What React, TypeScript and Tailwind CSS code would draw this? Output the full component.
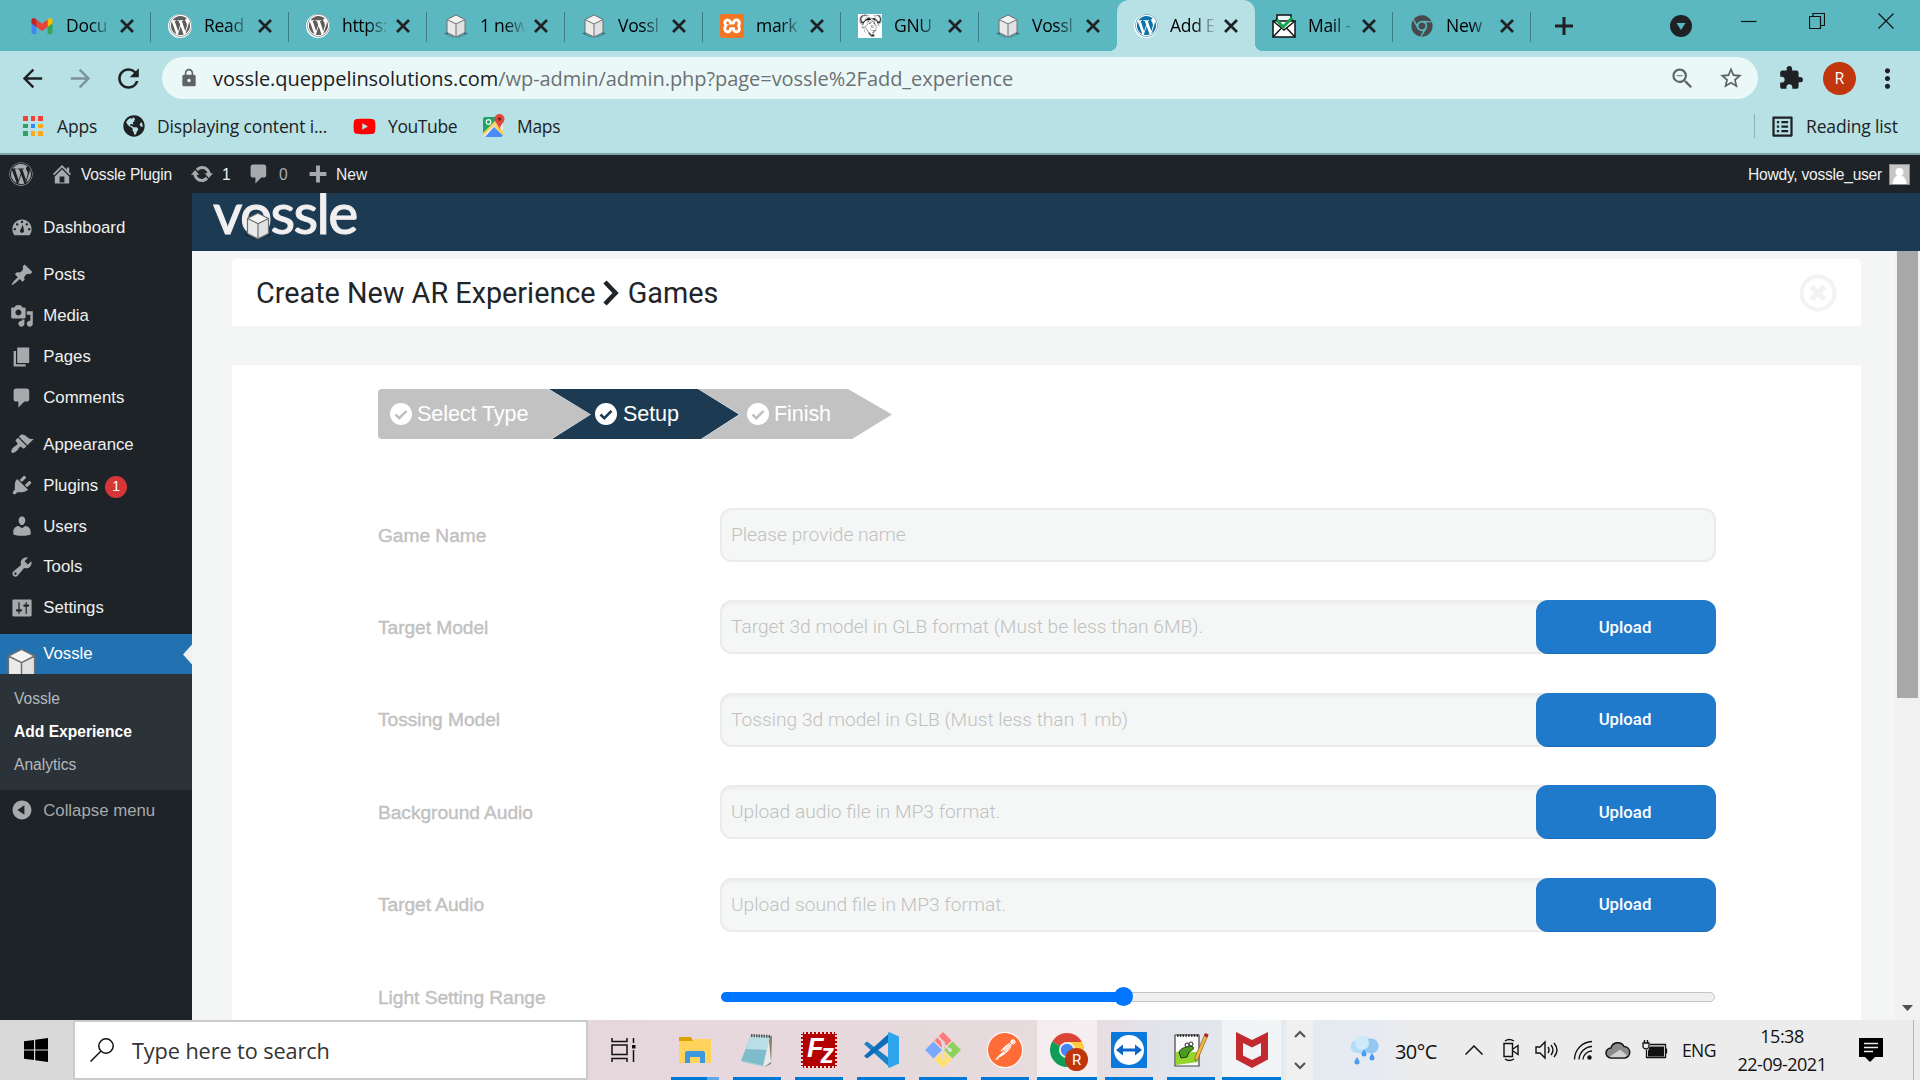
import type { ReactNode } from 'react';
import { FaChrome, FaWordpress, FaYoutube, FaGlobeAmericas } from 'react-icons/fa';
import {
  MdArrowBack,
  MdArrowForward,
  MdExtension,
  MdListAlt,
  MdLock,
  MdMoreVert,
  MdRefresh,
  MdStarBorder,
  MdZoomOut,
} from 'react-icons/md';
import { SiGnu, SiPostman, SiXampp } from 'react-icons/si';

/* ---------- icons ---------- */

const dash = {
  dashboard:
    'M3.76 16h12.48C17.34 14.63 18 12.9 18 11c0-4.42-3.58-8-8-8s-8 3.58-8 8c0 1.9.66 3.63 1.76 5zM10 4c.55 0 1 .45 1 1s-.45 1-1 1-1-.45-1-1 .45-1 1-1zM6 6c.55 0 1 .45 1 1s-.45 1-1 1-1-.45-1-1 .45-1 1-1zm8 0c.55 0 1 .45 1 1s-.45 1-1 1-1-.45-1-1 .45-1 1-1zm-3.3 1.2l.9 4.6c.3 1.2-.5 2.2-1.6 2.2s-1.9-1-1.6-2zM4 10c.55 0 1 .45 1 1s-.45 1-1 1-1-.45-1-1 .45-1 1-1zm12 0c.55 0 1 .45 1 1s-.45 1-1 1-1-.45-1-1 .45-1 1-1z',
  post: 'M10.44 3.02l1.82-1.82 6.36 6.35-1.83 1.82c-1.05-.68-2.48-.57-3.41.36l-.75.75c-.92.93-1.04 2.35-.35 3.41l-1.83 1.82-2.41-2.41-2.8 2.79c-.42.42-3.38 2.71-3.8 2.29s1.86-3.39 2.28-3.81l2.79-2.79L4.1 9.36l1.83-1.82c1.05.69 2.48.57 3.4-.36l.75-.75c.93-.92 1.05-2.35.36-3.41z',
  media:
    'M13 11V4c0-.55-.45-1-1-1h-1.67L9 1H5L3.67 3H2c-.55 0-1 .45-1 1v7c0 .55.45 1 1 1h10c.55 0 1-.45 1-1zM7 4.5c1.38 0 2.5 1.12 2.5 2.5S8.38 9.5 7 9.5 4.5 8.38 4.5 7 5.62 4.5 7 4.5zM14 6h5v10.5c0 1.38-1.12 2.5-2.5 2.5S14 17.88 14 16.5s1.12-2.5 2.5-2.5c.17 0 .34.02.5.05V9h-3V6zm-4 8.05V13h2v3.5c0 1.38-1.12 2.5-2.5 2.5S7 17.88 7 16.5 8.12 14 9.5 14c.17 0 .34.02.5.05z',
  page: 'M6 15V2h10v13H6zm-1 1h8v2H3V5h2v11z',
  comment:
    'M5 2h9c1.1 0 2 .9 2 2v7c0 1.1-.9 2-2 2h-2l-5 5v-5H5c-1.1 0-2-.9-2-2V4c0-1.1.9-2 2-2z',
  appearance:
    'M14.48 11.06L7.41 3.99l1.5-1.5c.5-.56 2.3-.47 3.51.32 1.21.8 1.43 1.28 2.91 2.1 1.18.64 2.45 1.26 4.45.85zm-.71.71L6.7 4.7 4.93 6.47c-.39.39-.39 1.02 0 1.41l1.06 1.06c.39.39.39 1.03 0 1.42-.6.6-1.43 1.11-2.21 1.69-.35.26-.7.53-1.01.84C1.43 14.23.4 16.08 1.4 17.07c.99 1 2.84-.03 4.18-1.36.31-.31.58-.66.85-1.02.57-.78 1.08-1.61 1.69-2.21.39-.39 1.02-.39 1.41 0l1.06 1.06c.39.39 1.02.39 1.41 0z',
  plugins:
    'M13.11 4.36L9.87 7.6 8 5.73l3.24-3.24c.35-.34 1.05-.2 1.56.32.52.51.66 1.21.31 1.55zm-8 1.77l.91-1.12 9.01 9.01-1.19.84c-.71.71-2.63 1.16-3.82 1.16H6.14L4.9 17.26c-.59.59-1.54.59-2.12 0-.59-.58-.59-1.53 0-2.12l1.24-1.24v-3.88c0-1.13.4-3.19 1.09-3.89zm7.26 3.97l3.24-3.24c.34-.35 1.04-.21 1.55.31.52.51.66 1.21.31 1.55l-3.24 3.25z',
  users:
    'M10 9.25c-2.27 0-2.73-3.44-2.73-3.44C7 4.02 7.82 2 9.97 2c2.16 0 2.98 2.02 2.71 3.81 0 0-.41 3.44-2.68 3.44zm0 2.57L12.72 10c2.39 0 4.52 2.33 4.52 4.53v2.49s-3.65 1.13-7.24 1.13c-3.65 0-7.24-1.13-7.24-1.13v-2.49c0-2.25 1.94-4.48 4.47-4.48z',
  tools:
    'M16.68 9.77c-1.34 1.34-3.3 1.67-4.95.99l-5.41 6.52c-.99.99-2.59.99-3.58 0s-.99-2.59 0-3.57l6.52-5.42c-.68-1.65-.35-3.61.99-4.95 1.28-1.28 3.12-1.62 4.72-1.06l-2.89 2.89 2.82 2.82 2.86-2.87c.53 1.58.18 3.39-1.08 4.65zM3.81 16.21c.4.39 1.04.39 1.43 0 .4-.4.4-1.04 0-1.43-.39-.4-1.03-.4-1.43 0-.39.39-.39 1.03 0 1.43z',
  settings:
    'M18 16V4c0-.55-.45-1-1-1H3c-.55 0-1 .45-1 1v12c0 .55.45 1 1 1h14c.55 0 1-.45 1-1zM8 11h1c.55 0 1 .45 1 1s-.45 1-1 1H8v1.5c0 .28-.22.5-.5.5s-.5-.22-.5-.5V13H6c-.55 0-1-.45-1-1s.45-1 1-1h1V5.5c0-.28.22-.5.5-.5s.5.22.5.5V11zm5-2h-1c-.55 0-1-.45-1-1s.45-1 1-1h1V5.5c0-.28.22-.5.5-.5s.5.22.5.5V7h1c.55 0 1 .45 1 1s-.45 1-1 1h-1v5.5c0 .28-.22.5-.5.5s-.5-.22-.5-.5V9z',
  home: 'M16 8.5l1.53 1.53-1.06 1.06L10 4.6l-6.47 6.49-1.06-1.06L10 2.5l4 4v-2h2v4zm-6-2.46l6 5.99V18H4v-5.97zM12 17v-5H8v5h4z',
  update:
    'M10.2 3.28c3.53 0 6.43 2.61 6.92 6h2.08l-3.5 4-3.5-4h2.32c-.45-1.97-2.21-3.45-4.32-3.45-1.45 0-2.73.71-3.54 1.78L4.95 5.66C6.23 4.2 8.11 3.28 10.2 3.28zm-.4 13.44c-3.52 0-6.43-2.61-6.92-6H.8l3.5-4c1.17 1.33 2.33 2.67 3.5 4H5.48c.45 1.97 2.21 3.45 4.32 3.45 1.45 0 2.73-.71 3.54-1.78l1.71 1.95c-1.28 1.46-3.15 2.38-5.25 2.38z',
  plus: 'M17 8.400v3.200h-5.400V17H8.400v-5.400H3V8.400h5.400V3h3.200v5.400z',
  collapse:
    'M10 2.16c4.33 0 7.84 3.51 7.84 7.84s-3.51 7.84-7.84 7.84S2.16 14.33 2.16 10 5.71 2.16 10 2.16zm2 11.72V6.12L6.18 9.97z',
};

function Dashicon({ d, className = 'size-6' }: { d: string; className?: string }) {
  return (
    <svg viewBox="0 0 20 20" className={className} fill="currentColor" fillRule="evenodd">
      <path d={d} />
    </svg>
  );
}

function Cube({ className }: { className: string }) {
  return (
    <svg viewBox="0 0 24 24" className={className}>
      <path d="M0 19.5l4-2v3l8 3.2-4-.8z M24 19.5l-4-2v3l-8 3.2 4-.8z" fill="#00000055" />
      <path d="M3 5.5L12 1l9 4.5L12 10z" fill="#f4f4f4" />
      <path d="M3 5.5L12 10v13l-9-4.5z" fill="#ebe9ea" />
      <path d="M21 5.5L12 10v13l9-4.5z" fill="#dfe1e2" />
      <path
        d="M3 5.5L12 1l9 4.5v13L12 23l-9-4.5zM3 5.5L12 10l9-4.5M12 10v13"
        fill="none"
        stroke="#6e6e6e"
        strokeWidth="1"
        strokeLinejoin="round"
      />
    </svg>
  );
}

function Gmail() {
  return (
    <svg viewBox="0 0 24 24" className="size-6">
      <path d="M1.5 6v12.4c0 .9.7 1.6 1.6 1.6H6.400V9.500z" fill="#4285f4" />
      <path d="M22.500 6v12.400c0 .9-.7 1.600-1.600 1.600H17.600V9.500z" fill="#34a853" />
      <path d="M17.600 5.500l2-1.300c1.300-.8 2.900.1 2.900 1.800v3.200l-4.900 3.700z" fill="#fbbc04" />
      <path d="M6.400 5.500L12 9.700l5.600-4.200v7.400L12 17l-5.600-4.100z" fill="#ea4335" />
      <path d="M1.500 9.200V6c0-1.700 1.600-2.600 2.900-1.800l2 1.300v7.400z" fill="#c5221f" />
    </svg>
  );
}

function WpFavicon({ color }: { color: string }) {
  return (
    <span className="flex size-6 items-center justify-center rounded-full bg-white">
      <FaWordpress size={23} color={color} />
    </span>
  );
}

function MailIcon() {
  return (
    <svg viewBox="0 0 24 24" className="size-6">
      <path d="M5 9V1h14v8" fill="#e9f6f4" stroke="#111" strokeWidth="1.500" />
      <path d="M1 8l4-4v4zM23 8l-4-4v4z" fill="#111" />
      <path d="M1 7h22v16H1z" fill="#fff" stroke="#111" strokeWidth="1.500" />
      <path d="M1 7l11 9 11-9M1 23l8.500-9M23 23l-8.500-9" fill="none" stroke="#111" strokeWidth="1.400" />
      <path d="M5 6l6 7L20 4" fill="none" stroke="#12a150" strokeWidth="3" />
    </svg>
  );
}

function Maps() {
  return (
    <svg viewBox="0 0 24 24" className="size-6">
      <rect x="1" y="3" width="20" height="20" rx="2" fill="#e9e9e9" />
      <path d="M1 5a2 2 0 012-2h14L1 20z" fill="#1fa463" />
      <path d="M3 23l9-10 9 8.500-1.500 1.500z" fill="#4c8bf5" />
      <path d="M1 19L17 3h3L1 22z" fill="#ffd04b" />
      <path d="M12 12l9 9.500V17l-7-7z" fill="#ffd04b" />
      <path d="M17.500 0a5 5 0 00-5 5c0 3.800 4.200 5 5 11 .8-6 5-7.200 5-11a5 5 0 00-5-5z" fill="#e1493c" />
      <circle cx="17.500" cy="5" r="1.800" fill="#7f231c" />
      <circle cx="6.500" cy="8" r="2.300" fill="none" stroke="#fff" strokeWidth="1.200" />
    </svg>
  );
}

function AppsGrid() {
  const colors = ['#f44336', '#f44336', '#f44336', '#34a05f', '#2b8df0', '#fba919', '#34a05f', '#fba919', '#fba919'];
  return (
    <div className="grid size-5 grid-cols-3 gap-[3px]">
      {colors.map((c, i) => (
        <span key={i} style={{ background: c }} />
      ))}
    </div>
  );
}

/* ---------- browser chrome ---------- */

type Tab = { icon: ReactNode; title: string; active?: boolean; line?: boolean };

const tabs: Tab[] = [
  { icon: <Gmail />, title: 'Docu', line: true },
  { icon: <WpFavicon color="#5f5d5c" />, title: 'Read', line: true },
  { icon: <WpFavicon color="#5f5d5c" />, title: 'https:', line: true },
  { icon: <Cube className="size-6" />, title: '1 new', line: true },
  { icon: <Cube className="size-6" />, title: 'Vossl', line: true },
  {
    icon: (
      <span className="flex size-6 items-center justify-center rounded bg-[linear-gradient(#f37623,#f37623)]">
        <span className="flex size-[20px] items-center justify-center bg-white">
          <SiXampp size={24} color="#f37623" className="shrink-0" />
        </span>
      </span>
    ),
    title: 'mark',
    line: true,
  },
  {
    icon: (
      <span className="flex size-6 items-center justify-center bg-white">
        <SiGnu size={23} color="#222" />
      </span>
    ),
    title: 'GNU',
    line: true,
  },
  { icon: <Cube className="size-6" />, title: 'Vossl' },
  { icon: <WpFavicon color="#0d72a6" />, title: 'Add E', active: true },
  { icon: <MailIcon />, title: 'Mail -', line: true },
  { icon: <FaChrome size={22} color="#474b4e" />, title: 'New', line: true },
];

function TabItem({ icon, title, active, line }: Tab) {
  return (
    <div
      className={
        active
          ? 'relative flex h-[51px] w-[138px] items-center rounded-t-xl bg-[#b7e1e4] pl-[17px]'
          : 'relative flex h-[51px] w-[138px] items-center pl-[17px]'
      }
    >
      <span className="flex w-[24px] shrink-0 justify-center">{icon}</span>
      <span className="ml-[12px] w-[44px] whitespace-nowrap text-[17.5px] tracking-[-0.3px] [mask-image:linear-gradient(to_right,#000_55%,#0002)]">
        {title}
      </span>
      <svg viewBox="0 0 14 14" className="ml-[10px] size-[14px]" stroke="#202124" strokeWidth="2.700">
        <path d="M1 1l12 12M13 1L1 13" />
      </svg>
      {line && <span className="absolute right-0 top-[12px] h-[30px] w-[1.500px] bg-[#3c7c82]" />}
      {active && (
        <>
          <span className="absolute -left-2 bottom-0 size-2 bg-[radial-gradient(circle_at_0_0,transparent_8px,#b7e1e4_8px)]" />
          <span className="absolute -right-2 bottom-0 size-2 bg-[radial-gradient(circle_at_100%_0,transparent_8px,#b7e1e4_8px)]" />
        </>
      )}
    </div>
  );
}

function TabStrip() {
  return (
    <div className="flex h-[51px] items-center bg-[#5bb8c1] pl-[13px]">
      {tabs.map((t, i) => (
        <TabItem key={i} {...t} />
      ))}
      <svg viewBox="0 0 18 18" className="ml-[24px] size-[18px]" stroke="#202124" strokeWidth="3">
        <path d="M9 0v18M0 9h18" />
      </svg>
      <svg viewBox="0 0 22 22" className="ml-[97px] size-[22px]">
        <circle cx="11" cy="11" r="11" fill="#202124" />
        <path d="M6.500 8h9L11 15z" fill="#5bb8c1" />
      </svg>
      <svg viewBox="0 0 16 16" className="ml-[49px] mb-[9px] size-4" stroke="#111" strokeWidth="1.200">
        <path d="M0 8.500h15.500" />
      </svg>
      <svg viewBox="0 0 16 16" className="ml-[52px] mb-[9px] size-4" fill="none" stroke="#111" strokeWidth="1.200">
        <path d="M.5 3.500h11v12H.5zM4 3.500V.5h11.500v12H11.500" />
      </svg>
      <svg viewBox="0 0 16 16" className="ml-[53px] mb-[9px] size-4" stroke="#111" strokeWidth="1.200">
        <path d="M.5.5l15 15M15.500.5l-15 15" />
      </svg>
    </div>
  );
}

function AddressBar() {
  return (
    <div className="flex h-[54px] items-center bg-[#b7e1e4] text-[#202124]">
      <MdArrowBack size={29} className="ml-[18px]" />
      <MdArrowForward size={29} className="ml-[19px] opacity-40" />
      <MdRefresh size={31} className="ml-[18px]" />
      <div className="ml-[18px] flex h-[42px] w-[1596px] items-center rounded-full bg-[#ebf8f8]">
        <MdLock size={20} className="ml-[17px] text-[#5f6368]" />
        <p className="ml-[14px] mt-[2px] flex-1 text-[20px] tracking-[-0.05px]">
          vossle.queppelinsolutions.com
          <span className="text-[#6b7174]">/wp-admin/admin.php?page=vossle%2Fadd_experience</span>
        </p>
        <MdZoomOut size={27} className="mr-[22px] text-[#5f6368]" />
        <MdStarBorder size={26} className="mr-[14px] text-[#5f6368]" />
      </div>
      <MdExtension size={26} className="ml-[20px]" />
      <span className="ml-[19px] flex size-[33px] items-center justify-center rounded-full bg-[#c1360c] text-[16px] text-white">
        R
      </span>
      <MdMoreVert size={31} className="ml-[16px]" />
    </div>
  );
}

function Bookmarks() {
  return (
    <div className="flex h-[50px] items-center border-b-2 border-[#7fa3a5] bg-[#b7e1e4] pb-[6px] text-[17.5px] tracking-[-0.15px] text-[#202124]">
      <div className="ml-[23px] flex w-[100px] items-center gap-[14px]">
        <AppsGrid />
        Apps
      </div>
      <div className="flex w-[230px] items-center gap-[12px]">
        <FaGlobeAmericas size={22} />
        Displaying content i...
      </div>
      <div className="flex w-[129px] items-center gap-[12px] tracking-[-0.4px]">
        <FaYoutube size={23} color="#f00" />
        YouTube
      </div>
      <div className="flex flex-1 items-center gap-[11px] tracking-[-0.3px]">
        <Maps />
        Maps
      </div>
      <div className="flex h-6 w-[166px] items-center gap-[10px] border-l border-[#8aaeb1] pl-[14px]">
        <MdListAlt size={27} />
        Reading list
      </div>
    </div>
  );
}

/* ---------- wordpress ---------- */

function AdminBar() {
  return (
    <div className="flex h-[38px] items-center bg-[#1d2327] font-['Liberation_Sans',Arial,sans-serif] text-[15.6px] text-[#f0f0f1]">
      <FaWordpress size={24} className="ml-[9px] text-[#a7aaad]" />
      <Dashicon d={dash.home} className="ml-[17px] size-6 text-[#a7aaad]" />
      <span className="ml-[7px] mt-[2px] w-[109px] tracking-[-0.2px]">Vossle Plugin</span>
      <Dashicon d={dash.update} className="ml-0 size-6 text-[#a7aaad]" />
      <span className="ml-[8px] mt-[2px] w-[25px]">1</span>
      <Dashicon d={dash.comment} className="size-6 text-[#a7aaad]" />
      <span className="ml-[8px] mt-[2px] w-[27px] text-[#a7aaad]">0</span>
      <Dashicon d={dash.plus} className="size-6 text-[#a7aaad]" />
      <span className="ml-[6px] mt-[2px] flex-1">New</span>
      <span className="mt-[2px] tracking-[-0.25px]">Howdy, vossle_user</span>
      <svg viewBox="0 0 21 21" className="ml-[7px] mr-[10px] size-[21px]">
        <rect x=".5" y=".5" width="20" height="20" fill="#c6c6c6" stroke="#8c8f94" />
        <circle cx="10.500" cy="8" r="4" fill="#fff" />
        <path d="M3.500 20c.4-5 2.500-7.500 5-8.500h4c2.500 1 4.600 3.500 5 8.500z" fill="#fff" />
      </svg>
    </div>
  );
}

const menuGroups = [
  [{ label: 'Dashboard', d: dash.dashboard }],
  [
    { label: 'Posts', d: dash.post },
    { label: 'Media', d: dash.media },
    { label: 'Pages', d: dash.page },
    { label: 'Comments', d: dash.comment },
  ],
  [
    { label: 'Appearance', d: dash.appearance },
    { label: 'Plugins', d: dash.plugins, badge: '1' },
    { label: 'Users', d: dash.users },
    { label: 'Tools', d: dash.tools },
    { label: 'Settings', d: dash.settings },
  ],
];

function Sidebar() {
  return (
    <aside className="flex w-[192px] shrink-0 flex-col bg-[#1d2327] pt-[14.500px] font-['Liberation_Sans',Arial,sans-serif] text-[16.8px] text-[#f0f0f1]">
      {menuGroups.map((group, g) => (
        <ul key={g} className="mb-[6px]">
          {group.map((item) => (
            <li key={item.label} className="flex h-[40.9px] items-center">
              <span className="flex w-[43.2px] justify-center text-[#a7aaad]">
                <Dashicon d={item.d} />
              </span>
              {item.label}
              {'badge' in item && (
                <span className="ml-[7px] mt-[3px] flex size-[22px] items-center justify-center rounded-full bg-[#d63638] text-[14px] text-white">
                  {item.badge as string}
                </span>
              )}
            </li>
          ))}
        </ul>
      ))}
      <div className="relative flex h-[40px] overflow-hidden bg-[#2271b1] text-white">
        <span className="w-[43.2px] shrink-0 pl-[4px] pt-[14px]">
          <Cube className="size-[35px]" />
        </span>
        <span className="pt-[7px]">Vossle</span>
        <span className="absolute right-0 top-[10px] h-[20px] w-[9px] bg-[#f0f0f1] [clip-path:polygon(100%_0,100%_100%,0_50%)]" />
      </div>
      <ul className="h-[116px] bg-[#2c3338] pl-[14px] pt-[8px] text-[15.6px] leading-[33px] text-[#b4b9be]">
        <li>Vossle</li>
        <li className="font-bold text-white">Add Experience</li>
        <li>Analytics</li>
      </ul>
      <div className="flex h-[40px] items-center text-[#a7aaad]">
        <span className="flex w-[43.2px] justify-center">
          <Dashicon d={dash.collapse} />
        </span>
        Collapse menu
      </div>
    </aside>
  );
}

function CheckCircle({ color }: { color: string }) {
  return (
    <svg viewBox="0 0 22 22" className="-mt-px size-[22px] shrink-0">
      <circle cx="11" cy="11" r="11" fill="#fff" />
      <path d="M5.500 11.500l3.800 3.700 7.200-7.400" fill="none" stroke={color} strokeWidth="2.600" />
    </svg>
  );
}

function Steps() {
  return (
    <div className="flex h-[50px] w-[514px] text-[21.6px] tracking-[-0.1px] text-white">
      <div className="flex w-[213px] items-center gap-[5px] rounded-l bg-[#c2c2c2] pl-[12px] [clip-path:polygon(0_0,170px_0,100%_51%,173px_100%,0_100%)]">
        <CheckCircle color="#c2c2c2" />
        Select Type
      </div>
      <div className="-ml-[42px] flex w-[190px] items-center gap-[6px] bg-[#1c3b53] pl-[46px] [clip-path:polygon(0_0,149px_0,100%_51%,152px_100%,3px_100%,42px_51%)]">
        <CheckCircle color="#1c3b53" />
        Setup
      </div>
      <div className="-ml-[41px] flex w-[194px] items-center gap-[5px] bg-[#c2c2c2] pl-[49px] [clip-path:polygon(0_0,150px_0,100%_51%,154px_100%,3px_100%,42px_51%)]">
        <CheckCircle color="#c2c2c2" />
        Finish
      </div>
    </div>
  );
}

const fields = [
  { label: 'Game Name', hint: 'Please provide name', upload: false },
  { label: 'Target Model', hint: 'Target 3d model in GLB format (Must be less than 6MB).', upload: true },
  { label: 'Tossing Model', hint: 'Tossing 3d model in GLB (Must less than 1 mb)', upload: true },
  { label: 'Background Audio', hint: 'Upload audio file in MP3 format.', upload: true },
  { label: 'Target Audio', hint: 'Upload sound file in MP3 format.', upload: true },
];

function SetupForm() {
  return (
    <div className="mt-[69px] flex flex-col gap-[38.4px]">
      {fields.map((f) => (
        <div key={f.label} className="flex h-[54px] items-center">
          <label className="mt-[2px] w-[342px] text-[19.2px] tracking-[-0.05px] text-[#c1c1c1] [-webkit-text-stroke:0.4px_#c1c1c1]">{f.label}</label>
          <div
            className={
              f.upload
                ? 'flex h-[54px] w-[996px] items-stretch rounded-xl bg-[#f5f7f6] shadow-[inset_0_0_0_2px_#ebebeb,inset_0_3px_4px_#0000000d]'
                : 'flex h-[54px] w-[996px] items-stretch rounded-xl bg-[#f5f7f6] shadow-[inset_0_0_0_2px_#ebebeb]'
            }
          >
            <span className="flex flex-1 items-center pl-[11px] pt-px font-[Roboto,sans-serif] text-[19.2px] font-light text-[#bfc1c0]">
              {f.hint}
            </span>
            {f.upload && (
              <button className="w-[180px] rounded-xl border-b border-[#1a6bb8] bg-[#1f7acc] pr-[2px] pt-px font-[Roboto,sans-serif] text-[16.8px] font-medium text-white">
                Upload
              </button>
            )}
          </div>
        </div>
      ))}
      <div className="flex h-[54px] items-center">
        <label className="mt-[2px] w-[342px] text-[19.2px] tracking-[-0.05px] text-[#c1c1c1] [-webkit-text-stroke:0.4px_#c1c1c1]">
          Light Setting Range
        </label>
        <div className="ml-[1px] flex h-[10px] w-[994px] items-center rounded-full border border-[#c4c4c4] bg-[#efefef]">
          <span className="-ml-px h-[10px] w-[396px] rounded-l-full bg-[#0075ff]" />
          <span className="-ml-[3px] size-[19px] rounded-full bg-[#0075ff]" />
        </div>
      </div>
    </div>
  );
}

function Content() {
  return (
    <main className="flex min-w-0 flex-1 flex-col font-['Liberation_Sans',Arial,sans-serif]">
      <div className="flex h-[58px] shrink-0 overflow-hidden bg-[#1c3b53] pl-[21px]">
        <div className="relative -mt-[2px] h-[58px]">
          <span className="block font-[Lato,sans-serif] text-[57px] leading-[42px] tracking-[-1.7px] text-[#f1eff0] [-webkit-text-stroke:1px_#f1eff0]">vossle</span>
          <Cube className="absolute left-[31px] top-[21px] size-[28px]" />
        </div>
      </div>
      <div className="flex min-h-0 flex-1 bg-[#f4f6f6]">
        <div className="ml-[40px] w-[1629px] pt-[8px]">
          <div className="flex h-[67px] items-center rounded-t bg-white pl-[24px] pr-[24px] font-[Roboto,sans-serif] text-[28.8px] text-[#212529]">
            <span className="mt-[2px]">Create New AR Experience</span>
            <svg viewBox="0 0 16 26" className="ml-[7px] mr-[9px] h-[26px] w-[16px]" fill="none" stroke="#212529" strokeWidth="4.600">
              <path d="M2 2l10.500 11L2 24" strokeLinejoin="miter" />
            </svg>
            <span className="mt-[2px]">Games</span>
            <svg viewBox="0 0 38 38" className="ml-auto size-[38px]" fill="none" stroke="#f3f3f3">
              <circle cx="19" cy="19" r="16.500" strokeWidth="4" />
              <path d="M12.500 12.500l13 13M25.500 12.500l-13 13" strokeWidth="5.500" />
            </svg>
          </div>
          <div className="mt-[39px] h-[655px] overflow-hidden bg-white pl-[146px] pt-[24px]">
            <Steps />
            <SetupForm />
          </div>
        </div>
        <div className="ml-auto flex w-[25px] flex-col items-center bg-[#f1f1f1]">
          <span className="h-[447px] w-[21px] bg-[#a8a8a8]" />
          <span className="mb-[9px] mt-auto h-[6px] w-[11px] bg-[#505050] [clip-path:polygon(0_0,100%_0,50%_100%)]" />
        </div>
      </div>
    </main>
  );
}

/* ---------- windows taskbar ---------- */

const Explorer = (
  <svg viewBox="0 0 36 36" className="size-9">
    <path d="M2 5h12l2 4v5H2z" fill="#e0a100" />
    <path d="M2 9h14l2-2h16v24H2z" fill="#ffd35c" />
    <path d="M8 31V21q0-2 2-2h16q2 0 2 2v10h-5v-6H13v6z" fill="#3d98de" />
  </svg>
);

const Notepad = (
  <svg viewBox="0 0 36 36" className="size-9">
    <path d="M13 3l20 1-1 28-7 3z" fill="#8a7a6a" />
    <path d="M12 3l19 1-6 31L2 29z" fill="#7fbccb" />
    <path d="M12 3l19 1-3 14L7 17z" fill="#b9dfe6" />
    <path d="M12 3.500l20 1" stroke="#555" strokeWidth="3" strokeDasharray="1.500 1" />
    <path d="M2 28l22 6 6-26 2 22-7 5z" fill="#e9e9e9" />
  </svg>
);

const FileZilla = (
  <span className="flex size-9 items-center justify-center border-2 border-dotted border-[#e9dada] bg-[#b30000] font-['Liberation_Sans',Arial,sans-serif] text-[27px] font-bold italic tracking-[-3px] text-white">
    <span className="-mt-1">F</span>
    <span className="mt-2">z</span>
  </span>
);

const VsCode = (
  <svg viewBox="0 0 36 36" className="size-9">
    <path d="M1 12l3-2.500L27 27v8.500z" fill="#1b80c4" />
    <path d="M1 24l3 2.500L27 9V.5z" fill="#0a6ebd" />
    <path d="M26 0l10 4.500v27L26 36l-1-1V1z" fill="#2fa5ee" />
  </svg>
);

const GitIcon = (
  <svg viewBox="0 0 36 36" className="size-9">
    <path d="M18 0l8.500 8.500-8.500 8.500-8.500-8.500z" fill="#ff7b7b" />
    <path d="M27.500 9.500L36 18l-8.500 8.500L19 18z" fill="#8bd45c" />
    <path d="M8.500 9.500L17 18l-8.500 8.500L0 18z" fill="#7aa8ff" />
    <path d="M18 19l8.500 8.500L18 36l-8.500-8.500z" fill="#ffe16b" />
    <path d="M13 5l5 5v17M18 12l7 6" fill="none" stroke="#e6d9dc" strokeWidth="2" />
    <circle cx="18" cy="11" r="2" fill="#e6d9dc" />
    <circle cx="25" cy="18" r="2" fill="#e6d9dc" />
    <circle cx="18" cy="26" r="2" fill="#e6d9dc" />
  </svg>
);

const Postman = (
  <span className="flex size-[36px] items-center justify-center rounded-full bg-white">
    <SiPostman size={34} color="#ff6c37" />
  </span>
);

const ChromeIcon = (
  <svg viewBox="0 0 40 40" className="ml-[4px] mt-[4px] size-[40px]">
    <path d="M18 18L3.300 9.500A17 17 0 0132.700 9.500z" fill="#db4437" />
    <path d="M18 18l14.700-8.500A17 17 0 0118 35z" fill="#ffcd40" />
    <path d="M18 18v17A17 17 0 013.300 9.500z" fill="#0f9d58" />
    <path d="M18 10h14.900L35 16 25 18z" fill="#ffcd40" />
    <circle cx="18" cy="18" r="8" fill="#f1f1f1" />
    <circle cx="18" cy="18" r="6.200" fill="#4285f4" />
    <circle cx="27.500" cy="27.500" r="11.500" fill="#bf350c" />
    <text x="27.500" y="33" fontSize="15" fill="#fff" textAnchor="middle" fontFamily="Roboto">
      R
    </text>
  </svg>
);

const TeamViewer = (
  <svg viewBox="0 0 36 36" className="size-9">
    <rect width="36" height="36" rx="1" fill="#0b78dc" />
    <circle cx="18" cy="18" r="15" fill="#fff" />
    <path d="M5 18l7-5.500v4h12v-4l7 5.500-7 5.500v-4H12v4z" fill="#0b66c8" />
  </svg>
);

const NotepadPlus = (
  <svg viewBox="0 0 36 36" className="size-9">
    <path d="M2 3h24v31H2z" fill="#fafafa" stroke="#444" strokeWidth="1.200" />
    <path d="M4 3.500h22" stroke="#222" strokeWidth="2.500" strokeDasharray="1.500 1.300" />
    <path d="M3 20h22v10L3 33z" fill="#96d42e" />
    <path d="M6 20c2-4 5-4 7-5s5-2 7 0-2 4-4 5l-2 5-6 1z" fill="#4b9b21" stroke="#183a10" />
    <circle cx="14" cy="13" r="2" fill="#fff" stroke="#222" />
    <circle cx="18" cy="12" r="2" fill="#fff" stroke="#222" />
    <path d="M32 2l3 1-10 24-3 2v-4z" fill="#f6b73c" stroke="#6b4a12" strokeWidth=".6" />
    <path d="M32 1l3.500 1.500-1 3L31 4z" fill="#b22" />
  </svg>
);

const McAfee = (
  <svg viewBox="0 0 36 36" className="size-9">
    <path d="M2 0l16 8L34 0v27.500L18 36 2 27.500zM9 11v12.500l9 4.500 9-4.500V11l-9 4.500z" fill="#c22a2f" fillRule="evenodd" />
  </svg>
);

const apps = [
  { icon: Explorer, cell: 'w-[62px]', bar: 'w-[48px] bg-[linear-gradient(to_right,#0078d7_75%,#5ea9e6_75%)]' },
  { icon: Notepad, cell: 'w-[62px]', bar: 'w-[48px] bg-[#0078d7]' },
  { icon: FileZilla, cell: 'w-[62px]', bar: 'w-[48px] bg-[#0078d7]' },
  { icon: VsCode, cell: 'w-[62px]', bar: 'w-[48px] bg-[#0078d7]' },
  { icon: GitIcon, cell: 'w-[62px]', bar: 'w-[48px] bg-[#0078d7]' },
  { icon: Postman, cell: 'w-[62px]', bar: 'w-[48px] bg-[#0078d7]' },
  { icon: ChromeIcon, cell: 'ml-[1px] w-[60px] bg-white/50', bar: 'w-[60px] bg-[#0078d7]' },
  { icon: TeamViewer, cell: 'w-[64px]', bar: 'w-[48px] bg-[#0078d7]' },
  { icon: NotepadPlus, cell: 'w-[60px]', bar: 'w-[48px] bg-[#0078d7]' },
  { icon: McAfee, cell: 'ml-[1px] w-[59px] bg-white/50', bar: 'w-[59px] bg-[#0078d7]' },
];

function Tray() {
  return (
    <div className="flex flex-1 items-center text-[17.5px] text-[#111]">
      <svg viewBox="0 0 32 32" className="ml-[36px] size-8">
        <path d="M8 19a6.500 6.500 0 010-13 9 9 0 0113-1 7 7 0 013 14z" fill="#b5dcf7" />
        <circle cx="22" cy="12" r="7.500" fill="#7fb9ea" opacity=".6" />
        <circle cx="13" cy="9" r="7" fill="#cdeafb" />
        <path d="M15 15c1.500 2.500 2.500 3.500 2.500 5a2.500 2.500 0 01-5 0c0-1.500 1-2.500 2.500-5zM8 23c1.500 2.500 2.500 3.500 2.500 5a2.500 2.500 0 01-5 0c0-1.500 1-2.500 2.500-5zM23 19c1.500 2.500 2.500 3.500 2.500 5a2.500 2.500 0 01-5 0c0-1.500 1-2.500 2.500-5z" fill="#4a9cf0" />
      </svg>
      <span className="ml-[14px] mt-1 w-[70px] text-[20px] tracking-[-0.6px]">30°C</span>
      <svg viewBox="0 0 18 10" className="h-[10px] w-[18px]" fill="none" stroke="#111" strokeWidth="1.500">
        <path d="M.5 9.500L9 1l8.500 8.500" />
      </svg>
      <svg viewBox="0 0 20 24" className="ml-[18px] h-[24px] w-[20px]" fill="none" stroke="#111" strokeWidth="1.400">
        <path d="M3 5.500h8.500v13H3zM12 11l5-3.500v9L12 13M4 3q4-3 9 0M4 21q4 3 9 0" />
      </svg>
      <svg viewBox="0 0 24 24" className="ml-[14px] size-6" fill="none" stroke="#111" strokeWidth="1.400">
        <path d="M1 9h4l5-5v16l-5-5H1zM13 9q2 3 0 6M16 7q4 5 0 10M19 5q6 7 0 14" />
      </svg>
      <svg viewBox="0 0 20 20" className="ml-[14px] size-5" fill="none" stroke="#111" strokeWidth="1.300">
        <path d="M1.500 19.500A18 18 0 0119 1.500M6 19.500A13.500 13.500 0 0119 6.500M10 19.500A9 9 0 0119 11" />
        <circle cx="16.500" cy="17.500" r="1.600" fill="#111" />
      </svg>
      <svg viewBox="0 0 26 20" className="ml-[12px] h-[20px] w-[26px]">
        <path d="M6 18a5 5 0 010-10 7 7 0 0113-1.500A5.800 5.800 0 0120 18z" fill="#8b8b8b" stroke="#111" strokeWidth="1.500" />
        <path d="M5 16.500l10-7 7 6-2 1.700H6z" fill="#d0d0d0" />
      </svg>
      <svg viewBox="0 0 26 22" className="ml-[11px] h-[22px] w-[26px]">
        <path d="M8 7.500h14v10H6V12" fill="#111" />
        <path d="M8 5.500h15.500v13H4.500V11M24.500 9.500v5" fill="none" stroke="#111" strokeWidth="1.300" />
        <path d="M1 4h6v4q-1 2-3 2T1 8zM2.500 1v3M5.500 1v3" fill="#ececec" stroke="#111" strokeWidth="1.300" />
      </svg>
      <span className="ml-[14px] w-[54px] tracking-[-0.6px]">ENG</span>
      <div className="flex w-[92px] flex-col items-center whitespace-nowrap text-[18px] leading-[28px] tracking-[-0.5px]">
        <span>15:38</span>
        <span>22-09-2021</span>
      </div>
      <svg viewBox="0 0 24 24" className="ml-[31px] size-6">
        <path d="M0 0h24v19h-8l-5 5-5-5H0z" fill="#000" />
        <path d="M5 5.500h14M5 9.500h14M5 13.500h9" stroke="#ececec" strokeWidth="1.300" />
      </svg>
      <span className="ml-[30px] h-[60px] w-px bg-[#b5b5b5]" />
    </div>
  );
}

function Taskbar() {
  return (
    <footer className="flex h-[60px] bg-[linear-gradient(to_right,#d9d9da_0,#d9d9da_580px,#e6d7dd_590px,#e6d9dc_900px,#e8dcdf_1080px,#e2e4ec_1170px,#e3ecee_1300px,#e6eaf2_1370px,#ececec_1420px)]">
      <div className="flex w-[73px] items-center pl-[24px]">
        <svg viewBox="0 0 24 24" className="size-6">
          <path d="M0 3.300l10-1.400v9.500H0zM11.200 1.700L24 0v11.400H11.200zM0 12.600h10v9.500L0 20.700zM11.200 12.600H24V24l-12.800-1.700z" />
        </svg>
      </div>
      <div className="flex w-[515px] items-center border-2 border-[#cbcbcb] bg-white">
        <svg viewBox="0 0 24 24" className="ml-[15px] size-6" fill="none" stroke="#111" strokeWidth="1.500">
          <circle cx="16" cy="8" r="7.200" />
          <path d="M10.800 13.200L.5 23.500" />
        </svg>
        <span className="ml-[18px] mt-[3px] text-[21.7px] tracking-[-0.1px] text-[#333]">Type here to search</span>
      </div>
      <div className="flex w-[76px] items-center pl-[23px]">
        <svg viewBox="0 0 26 24" className="h-6 w-[26px]" fill="none" stroke="#111" strokeWidth="1.500">
          <path d="M1 0v3.500h15V0M1 7h15v9.500H1zM1 24v-3.500h15V24M22.500 0v5M22.500 12v12" />
          <path d="M21 7h3.500v3.500H21z" fill="#111" stroke="none" />
        </svg>
      </div>
      {apps.map((a, i) => (
        <div key={i} className={`flex flex-col items-center ${a.cell}`}>
          <span className="flex h-[57px] items-center pt-[3px]">{a.icon}</span>
          <span className={`h-[3px] ${a.bar}`} />
        </div>
      ))}
      <div className="ml-[5px] flex w-[27px] flex-col items-center justify-between bg-[#f0f0f0] py-[10px]">
        <svg viewBox="0 0 12 8" className="h-[8px] w-[12px]" fill="none" stroke="#555" strokeWidth="2.200">
          <path d="M1 7l5-5 5 5" />
        </svg>
        <svg viewBox="0 0 12 8" className="h-[8px] w-[12px]" fill="none" stroke="#555" strokeWidth="2.200">
          <path d="M1 1l5 5 5-5" />
        </svg>
      </div>
      <Tray />
    </footer>
  );
}

export default function App() {
  return (
    <div className="flex h-[1080px] w-[1920px] flex-col overflow-hidden font-['Open_Sans','Noto_Sans',sans-serif]">
      <TabStrip />
      <AddressBar />
      <Bookmarks />
      <AdminBar />
      <div className="flex min-h-0 flex-1">
        <Sidebar />
        <Content />
      </div>
      <Taskbar />
    </div>
  );
}
